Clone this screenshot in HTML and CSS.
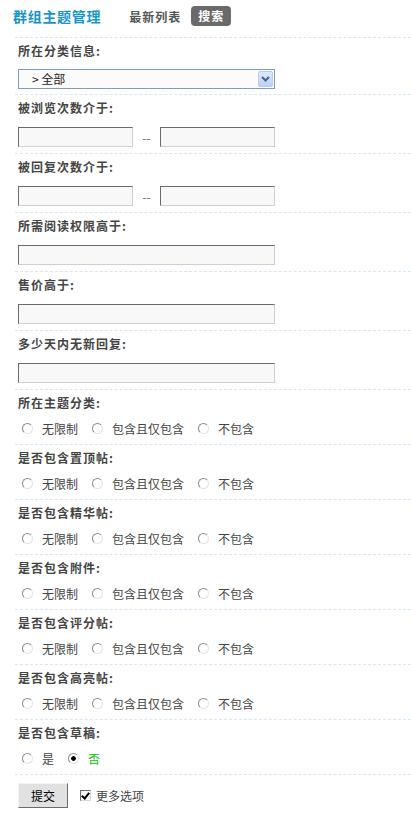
FILE: index.html
```html
<!DOCTYPE html>
<html lang="zh-CN">
<head>
    <meta charset="UTF-8">
    <meta name="viewport" content="width=device-width, initial-scale=1.0">
    <title>群组主题管理</title>
    <link rel="stylesheet" href="styles.css">
</head>
<body>
    <div class="header">
        <span class="title">群组主题管理</span>
        <a class="tab" href="#">最新列表</a>
        <a class="tab tab-active" href="#">搜索</a>
    </div>

    <form class="search-form">
        <div class="row row-select">
            <div class="row-label">所在分类信息:</div>
            <div class="select-wrap">
                <select class="select">
                    <option>&gt; 全部</option>
                </select>
                <span class="select-btn">
                    <svg width="9" height="6" viewBox="0 0 9 6"><polyline points="1,1 4.5,4.5 8,1" fill="none" stroke="#4d6185" stroke-width="2"/></svg>
                </span>
            </div>
        </div>

        <div class="row">
            <div class="row-label">被浏览次数介于:</div>
            <div class="range">
                <input type="text" class="text-input text-short">
                <span class="range-sep">--</span>
                <input type="text" class="text-input text-short">
            </div>
        </div>

        <div class="row">
            <div class="row-label">被回复次数介于:</div>
            <div class="range">
                <input type="text" class="text-input text-short">
                <span class="range-sep">--</span>
                <input type="text" class="text-input text-short">
            </div>
        </div>

        <div class="row">
            <div class="row-label">所需阅读权限高于:</div>
            <input type="text" class="text-input text-long">
        </div>

        <div class="row">
            <div class="row-label">售价高于:</div>
            <input type="text" class="text-input text-long">
        </div>

        <div class="row">
            <div class="row-label">多少天内无新回复:</div>
            <input type="text" class="text-input text-long">
        </div>

        <div class="row row-radio">
            <div class="row-label">所在主题分类:</div>
            <div class="options">
                <label class="opt"><input type="radio" name="r1">无限制</label>
                <label class="opt"><input type="radio" name="r1">包含且仅包含</label>
                <label class="opt"><input type="radio" name="r1">不包含</label>
            </div>
        </div>

        <div class="row row-radio">
            <div class="row-label">是否包含置顶帖:</div>
            <div class="options">
                <label class="opt"><input type="radio" name="r2">无限制</label>
                <label class="opt"><input type="radio" name="r2">包含且仅包含</label>
                <label class="opt"><input type="radio" name="r2">不包含</label>
            </div>
        </div>

        <div class="row row-radio">
            <div class="row-label">是否包含精华帖:</div>
            <div class="options">
                <label class="opt"><input type="radio" name="r3">无限制</label>
                <label class="opt"><input type="radio" name="r3">包含且仅包含</label>
                <label class="opt"><input type="radio" name="r3">不包含</label>
            </div>
        </div>

        <div class="row row-radio">
            <div class="row-label">是否包含附件:</div>
            <div class="options">
                <label class="opt"><input type="radio" name="r4">无限制</label>
                <label class="opt"><input type="radio" name="r4">包含且仅包含</label>
                <label class="opt"><input type="radio" name="r4">不包含</label>
            </div>
        </div>

        <div class="row row-radio">
            <div class="row-label">是否包含评分帖:</div>
            <div class="options">
                <label class="opt"><input type="radio" name="r5">无限制</label>
                <label class="opt"><input type="radio" name="r5">包含且仅包含</label>
                <label class="opt"><input type="radio" name="r5">不包含</label>
            </div>
        </div>

        <div class="row row-radio">
            <div class="row-label">是否包含高亮帖:</div>
            <div class="options">
                <label class="opt"><input type="radio" name="r6">无限制</label>
                <label class="opt"><input type="radio" name="r6">包含且仅包含</label>
                <label class="opt"><input type="radio" name="r6">不包含</label>
            </div>
        </div>

        <div class="row row-radio">
            <div class="row-label">是否包含草稿:</div>
            <div class="options">
                <label class="opt"><input type="radio" name="r7">是</label>
                <label class="opt opt-on"><input type="radio" name="r7" checked>否</label>
            </div>
        </div>

        <div class="row row-submit">
            <button type="button" class="submit-btn">提交</button>
            <label class="more"><input type="checkbox" checked>更多选项</label>
        </div>
    </form>
</body>
</html>
```

FILE: styles.css
```css
body {
    margin: 0;
    background: #fff;
    color: #444;
    font-family: "Noto Sans CJK SC", "Liberation Sans", sans-serif;
    font-size: 12px;
}

.header {
    display: flex;
    align-items: center;
    height: 32px;
    margin-bottom: 5px;
    padding-left: 13px;
}

.title {
    color: #1596c8;
    font-size: 14px;
    font-weight: bold;
    letter-spacing: 0.7px;
    margin-right: 28px;
}

.tab {
    color: #555;
    font-weight: bold;
    letter-spacing: 1px;
    text-decoration: none;
    margin-right: 10px;
}

.tab-active {
    background: #6a6a6a;
    color: #fff;
    border-radius: 4px;
    height: 20px;
    line-height: 20px;
    padding: 0 7px;
}

.search-form {
    margin-left: 15px;
}

.row {
    border-top: 1px dashed #d8e7f3;
    padding: 3px 0 6px 3px;
}

.row-label {
    font-weight: bold;
    letter-spacing: 1px;
    line-height: 20px;
    margin-bottom: 9px;
    color: #444;
}

/* select */
.row-select {
    padding-bottom: 5px;
}

.row-select .row-label {
    margin-bottom: 8px;
}

.select-wrap {
    position: relative;
    width: 257px;
    height: 20px;
}

.select {
    -webkit-appearance: none;
    appearance: none;
    width: 100%;
    height: 20px;
    margin: 0;
    box-sizing: border-box;
    border: 1px solid #7f9db9;
    border-radius: 0;
    background: #fbfbfb;
    color: #222;
    font-family: inherit;
    font-size: 12px;
    padding: 0 0 0 13px;
    line-height: 18px;
}

.select-btn {
    position: absolute;
    top: 2px;
    right: 2px;
    bottom: 2px;
    width: 15px;
    box-sizing: border-box;
    border: 1px solid #b9ccf5;
    border-radius: 2px;
    background: linear-gradient(#e0e9fe, #bccdf8);
    display: flex;
    align-items: center;
    justify-content: center;
    pointer-events: none;
}

/* text inputs */
.range {
    display: flex;
    align-items: center;
}

.text-input {
    height: 20px;
    margin: 0;
    box-sizing: border-box;
    border: 1px solid;
    border-color: #6b6b6b #cfcfcf #cfcfcf #6b6b6b;
    background: #f8f8f8;
    padding: 0 3px;
    font-family: inherit;
    font-size: 12px;
    outline: none;
}

.text-short {
    width: 115px;
}

.text-long {
    display: block;
    width: 257px;
}

.range-sep {
    width: 27px;
    text-align: center;
    color: #666;
}

/* radios */
.row-radio .row-label {
    margin-bottom: 5px;
}

.options {
    display: flex;
    height: 20px;
    align-items: center;
}

.opt {
    display: inline-flex;
    align-items: center;
    color: #444;
    margin-right: 10px;
}

.opt input {
    -webkit-appearance: none;
    appearance: none;
    width: 11px;
    height: 11px;
    margin: 0 9px 0 4px;
    border: 1px solid;
    border-color: #8c8c8c #e4e4e4 #e4e4e4 #8c8c8c;
    border-radius: 50%;
    background: #fff;
}

.opt input:checked {
    background: radial-gradient(circle, #000 0 2px, #fff 2.6px);
}

.opt-on {
    color: #0c0;
}

/* submit */
.row-submit {
    display: flex;
    align-items: center;
    padding-top: 8px;
    padding-bottom: 8px;
}

.submit-btn {
    width: 50px;
    height: 25px;
    margin: 0;
    padding: 0;
    border: 1px solid;
    border-color: #f4f4f4 #6a6a6a #6a6a6a #f4f4f4;
    background: #e1e1e1;
    color: #000;
    font-family: inherit;
    font-size: 12px;
}

.more {
    display: inline-flex;
    align-items: center;
    margin-left: 12px;
    color: #444;
}

.more input {
    -webkit-appearance: none;
    appearance: none;
    position: relative;
    width: 11px;
    height: 11px;
    margin: 0 5px 0 0;
    border: 1px solid;
    border-color: #707070 #d8d8d8 #d8d8d8 #707070;
    background: #fff;
}

.more input:checked::after {
    content: "";
    position: absolute;
    left: 2px;
    top: 0;
    width: 3px;
    height: 6px;
    border: solid #000;
    border-width: 0 2px 2px 0;
    transform: rotate(40deg);
}
```
